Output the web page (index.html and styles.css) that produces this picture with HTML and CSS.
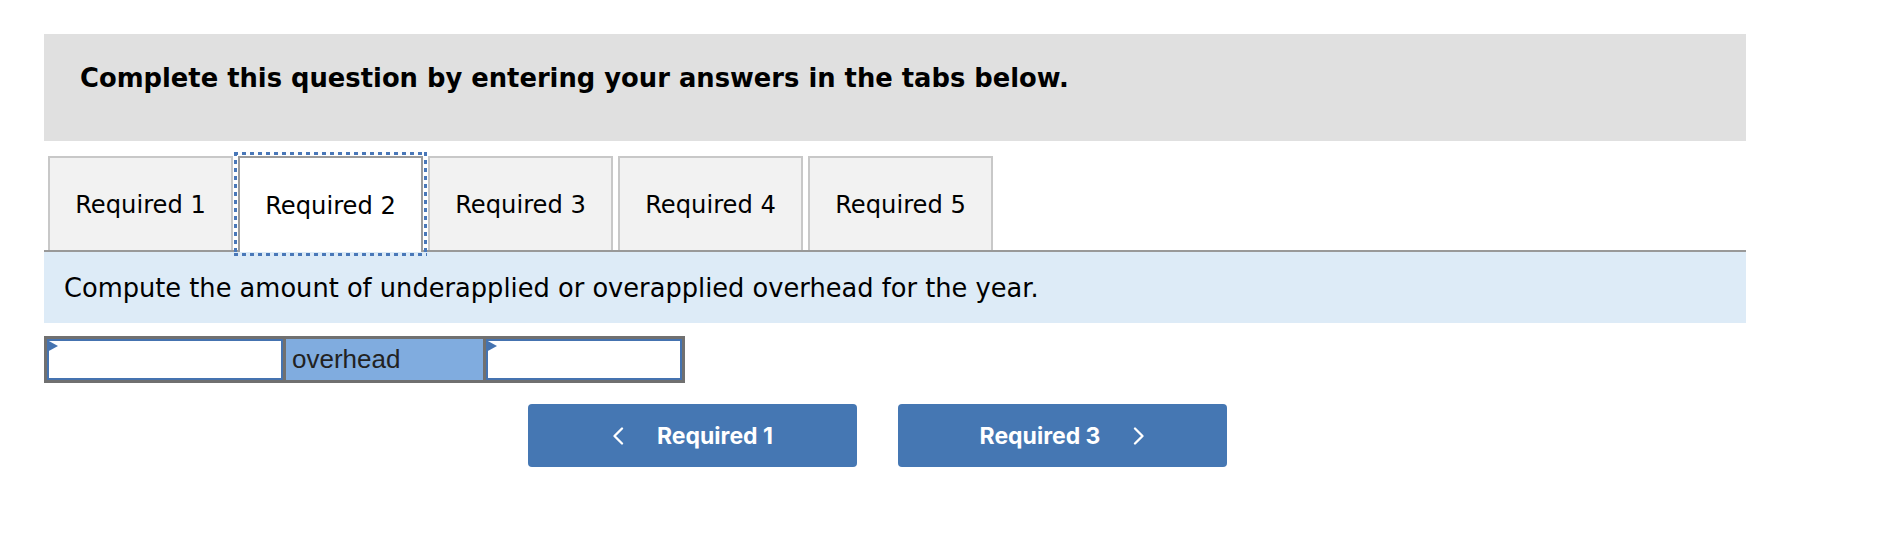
FILE: index.html
```html
<!DOCTYPE html>
<html lang="en">
<head>
<meta charset="utf-8">
<title>Required 2</title>
<link rel="stylesheet" href="styles.css">
</head>
<body>
<div class="page">
  <div class="instructions">
    <p>Complete this question by entering your answers in the tabs below.</p>
  </div>
  <div class="tabs">
    <button class="tab">Required 1</button>
    <button class="tab active">Required 2</button>
    <button class="tab">Required 3</button>
    <button class="tab">Required 4</button>
    <button class="tab">Required 5</button>
  </div>
  <div class="question">Compute the amount of underapplied or overapplied overhead for the year.</div>
  <div class="answer-row">
    <div class="cell input cell-a"><span class="tri"></span></div>
    <div class="cell label">overhead</div>
    <div class="cell input cell-c"><span class="tri"></span></div>
  </div>
  <div class="nav">
    <button class="nav-btn">
      <svg class="chev" width="12" height="18" viewBox="0 0 12 18"><polyline points="10,1.5 2.5,9 10,16.5" fill="none" stroke="#fff" stroke-width="2.3" stroke-linecap="round" stroke-linejoin="round"/></svg>
      <span>Required 1</span>
    </button>
    <button class="nav-btn">
      <span>Required 3</span>
      <svg class="chev" width="12" height="18" viewBox="0 0 12 18"><polyline points="2,1.5 9.5,9 2,16.5" fill="none" stroke="#fff" stroke-width="2.3" stroke-linecap="round" stroke-linejoin="round"/></svg>
    </button>
  </div>
</div>
</body>
</html>
```
FILE: styles.css
```css
html, body {
  margin: 0;
  padding: 0;
  background: #ffffff;
}

body {
  font-family: "DejaVu Sans", Verdana, sans-serif;
  color: #000;
}

.page {
  padding: 34px 0 0 44px;
}

.instructions {
  width: 1702px;
  height: 107px;
  box-sizing: border-box;
  background: #e0e0e0;
  padding: 29px 0 0 36px;
}

.instructions p {
  margin: 0;
  font-weight: 700;
  font-size: 25.8px;
  line-height: 30px;
}

.tabs {
  width: 1702px;
  box-sizing: border-box;
  margin-top: 15px;
  padding-left: 4px;
  display: flex;
  gap: 5px;
  align-items: flex-start;
  border-bottom: 2px solid #999999;
  height: 96px;
}

.tab {
  position: relative;
  width: 185px;
  height: 94px;
  box-sizing: border-box;
  margin: 0;
  padding: 2px 0 0;
  border: 2px solid #c8c8c8;
  border-bottom: none;
  background: #f2f2f2;
  font-family: "DejaVu Sans", Verdana, sans-serif;
  font-size: 24.2px;
  color: #000;
  text-align: center;
}

.tab.active {
  background: #ffffff;
  border-color: #9c9c9c;
  height: 96px;
  z-index: 1;
}

.tab.active::after {
  content: "";
  position: absolute;
  left: -6px;
  right: -6px;
  top: -6px;
  bottom: -4px;
  pointer-events: none;
  background:
    repeating-linear-gradient(90deg, #4a78b8 0 4px, transparent 4px 8px) left top / 100% 3px no-repeat,
    repeating-linear-gradient(90deg, #4a78b8 0 4px, transparent 4px 8px) left bottom / 100% 3px no-repeat,
    repeating-linear-gradient(180deg, #4a78b8 0 4px, transparent 4px 8px) left top / 3px 100% no-repeat,
    repeating-linear-gradient(180deg, #4a78b8 0 4px, transparent 4px 8px) right top / 3px 100% no-repeat;
}

.question {
  width: 1702px;
  height: 71px;
  box-sizing: border-box;
  background: #ddebf7;
  padding-left: 20px;
  display: flex;
  align-items: center;
  font-size: 25.7px;
}

.answer-row {
  margin-top: 13px;
  width: 641px;
  height: 47px;
  box-sizing: border-box;
  border: 3px solid #707070;
  background: #707070;
  display: flex;
  gap: 3px;
}

.cell {
  box-sizing: border-box;
  height: 100%;
}

.cell.input {
  position: relative;
  background: #ffffff;
  border: 2px solid #4573b0;
}

.cell-a { width: 236px; }
.cell-c { width: 196px; }

.tri {
  position: absolute;
  left: -2px;
  top: -1px;
  width: 0;
  height: 0;
  border-left: 11px solid #4573b0;
  border-top: 6px solid transparent;
  border-bottom: 6px solid transparent;
}

.cell.label {
  width: 197px;
  background: #80acdf;
  padding-left: 6px;
  display: flex;
  align-items: center;
  font-family: "Liberation Sans", Arial, sans-serif;
  font-size: 26px;
  color: #222;
}

.nav {
  margin-top: 21px;
  padding-left: 484px;
  display: flex;
  gap: 41px;
}

.nav-btn {
  width: 329px;
  height: 63px;
  margin: 0;
  border: none;
  border-radius: 4px;
  background: #4577b3;
  color: #ffffff;
  display: flex;
  align-items: center;
  justify-content: center;
  gap: 33px;
  font-family: Inter, Roboto, sans-serif;
  font-weight: 700;
  font-size: 23px;
}

.chev {
  display: block;
}
```
